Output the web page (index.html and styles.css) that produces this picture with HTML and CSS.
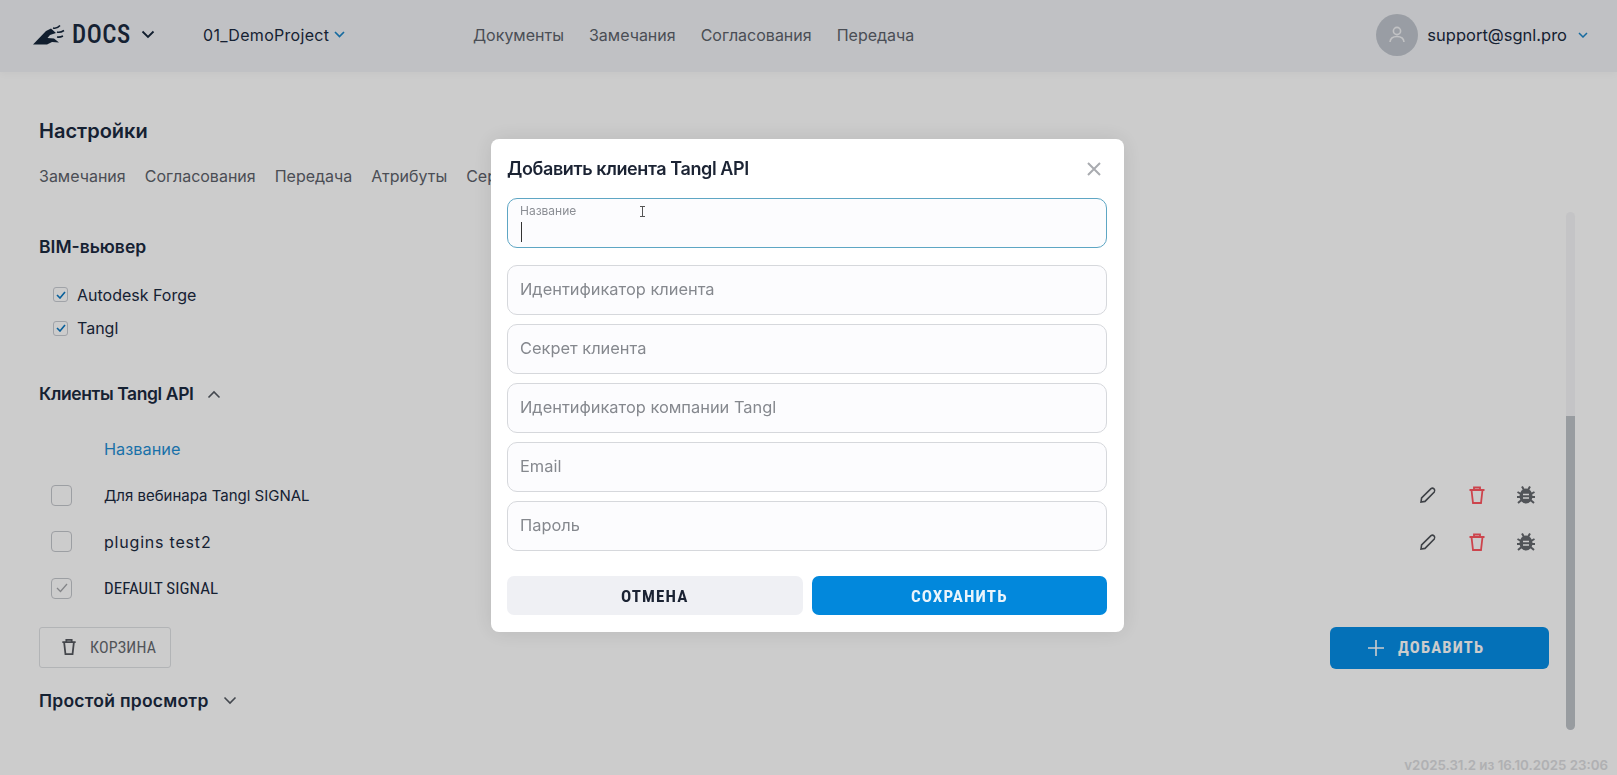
FILE: index.html
```html
<!DOCTYPE html>
<html lang="ru">
<head>
<meta charset="utf-8">
<title>Настройки</title>
<link rel="stylesheet" href="styles.css">
</head>
<body>
<div class="app">
  <header class="topbar">
    <div class="brand">
      <svg class="logo" width="32" height="20" viewBox="0 0 32 20"><path d="M0 19.500 L13 6 L18 3.500 L23 8 L17 10 L14.500 13 L21 13.500 L26 17.500 L19 17 L14 19.500 Z" fill="#16263a"/><path d="M20 3 Q24 4 27 .5 M24 7 Q27 8 31 5.500 M24 12 Q27 12.500 30 11" stroke="#16263a" stroke-width="1.500" fill="none"/></svg>
      <span class="brand-name">DOCS</span>
      <svg class="chev" width="14" height="9" viewBox="0 0 14 9"><path d="M1.500 1.500 L7 7 L12.500 1.500" stroke="#16263a" stroke-width="1.800" fill="none"/></svg>
    </div>
    <div class="project">01_DemoProject
      <svg width="11" height="7" viewBox="0 0 11 7"><path d="M1 1 L5.500 5.500 L10 1" stroke="#1c86c8" stroke-width="1.700" fill="none"/></svg>
    </div>
    <nav class="mainnav">
      <a>Документы</a><a>Замечания</a><a>Согласования</a><a>Передача</a>
    </nav>
    <div class="user">
      <span class="avatar"><svg width="20" height="20" viewBox="0 0 20 20"><circle cx="10" cy="6" r="3.600" stroke="#f2f3f6" stroke-width="1.600" fill="none"/><path d="M3 17 Q3.500 11.500 10 11.500 Q16.500 11.500 17 17" stroke="#f2f3f6" stroke-width="1.600" fill="none"/></svg></span>
      <span class="user-mail">support@sgnl.pro</span>
      <svg width="10" height="6" viewBox="0 0 10 6"><path d="M1 1 L5 5 L9 1" stroke="#1c86c8" stroke-width="1.500" fill="none"/></svg>
    </div>
  </header>

  <main class="content">
    <h1 class="page-title">Настройки</h1>
    <div class="tabs"><a>Замечания</a><a>Согласования</a><a>Передача</a><a>Атрибуты</a><a>Сер</a></div>

    <h2 class="section-title viewer-title">BIM-вьювер</h2>
    <label class="check-row"><span class="minibox"><svg width="10" height="8" viewBox="0 0 10 8"><path d="M1 4 L4 7 L9 1" stroke="#0a78c2" stroke-width="1.600" fill="none"/></svg></span>Autodesk Forge</label>
    <label class="check-row"><span class="minibox"><svg width="10" height="8" viewBox="0 0 10 8"><path d="M1 4 L4 7 L9 1" stroke="#0a78c2" stroke-width="1.600" fill="none"/></svg></span>Tangl</label>

    <div class="section-head clients-head">
      <h2 class="section-title tight">Клиенты Tangl API</h2>
      <svg width="14" height="9" viewBox="0 0 14 9"><path d="M1.500 7.500 L7 2 L12.500 7.500" stroke="#555b63" stroke-width="1.600" fill="none"/></svg>
    </div>
    <div class="col-head">Название</div>

    <div class="row">
      <span class="box"></span><span class="row-name">Для вебинара Tangl SIGNAL</span>
      <span class="row-actions">
        <svg width="20" height="20" viewBox="0 0 20 20"><path d="M3 17 L3.600 13 L13 3.600 Q14.500 2.500 16 3.800 Q17.500 5.500 16.300 7 L7 16.400 Z" stroke="#4e5258" stroke-width="1.600" fill="none"/></svg>
        <svg width="20" height="20" viewBox="0 0 20 20"><path d="M2.500 5 H17.500 M7 5 V2.500 H13 V5 M4.500 5 L6 18 H14 L15.500 5" stroke="#ff5560" stroke-width="1.800" fill="none"/></svg>
        <svg width="20" height="20" viewBox="0 0 20 20"><ellipse cx="10" cy="11" rx="6.500" ry="7.500" fill="#66696f"/><path d="M6 1.500 L8 5 M14 1.500 L12 5 M1.500 7 L5 9 M18.500 7 L15 9 M1 12 H5 M19 12 H15 M2 18 L5.500 15 M18 18 L14.500 15" stroke="#66696f" stroke-width="2"/><path d="M7 9.500 H13 M7 13 H13" stroke="#fff" stroke-width="1.500"/></svg>
      </span>
    </div>
    <div class="row">
      <span class="box"></span><span class="row-name wide">plugins test2</span>
      <span class="row-actions">
        <svg width="20" height="20" viewBox="0 0 20 20"><path d="M3 17 L3.600 13 L13 3.600 Q14.500 2.500 16 3.800 Q17.500 5.500 16.300 7 L7 16.400 Z" stroke="#4e5258" stroke-width="1.600" fill="none"/></svg>
        <svg width="20" height="20" viewBox="0 0 20 20"><path d="M2.500 5 H17.500 M7 5 V2.500 H13 V5 M4.500 5 L6 18 H14 L15.500 5" stroke="#ff5560" stroke-width="1.800" fill="none"/></svg>
        <svg width="20" height="20" viewBox="0 0 20 20"><ellipse cx="10" cy="11" rx="6.500" ry="7.500" fill="#66696f"/><path d="M6 1.500 L8 5 M14 1.500 L12 5 M1.500 7 L5 9 M18.500 7 L15 9 M1 12 H5 M19 12 H15 M2 18 L5.500 15 M18 18 L14.500 15" stroke="#66696f" stroke-width="2"/><path d="M7 9.500 H13 M7 13 H13" stroke="#fff" stroke-width="1.500"/></svg>
      </span>
    </div>
    <div class="row">
      <span class="box box-disabled"><svg width="12" height="10" viewBox="0 0 12 10"><path d="M1 5 L4.500 8.500 L11 1" stroke="#a5a7ab" stroke-width="1.300" fill="none"/></svg></span><span class="row-name narrow">DEFAULT SIGNAL</span>
    </div>

    <div class="btn-row">
      <button class="btn-trash"><svg width="16" height="18" viewBox="0 0 18 20"><path d="M1.500 4.500 H16.500 M6 4.500 V2 H12 V4.500 M3.500 4.500 L5 18 H13 L14.500 4.500" stroke="#55585e" stroke-width="2" fill="none"/></svg>КОРЗИНА</button>
      <button class="btn-add"><svg width="16" height="16" viewBox="0 0 16 16"><path d="M8 0 V16 M0 8 H16" stroke="#fff" stroke-width="1.600"/></svg>ДОБАВИТЬ</button>
    </div>

    <div class="section-head simple-head">
      <h2 class="section-title loose">Простой просмотр</h2>
      <svg width="14" height="9" viewBox="0 0 14 9"><path d="M1.500 1.500 L7 7 L12.500 1.500" stroke="#555b63" stroke-width="1.600" fill="none"/></svg>
    </div>
    <div class="version">v2025.31.2 из 16.10.2025 23:06</div>
  </main>
  <div class="scroll-track"><div class="scroll-thumb-light"></div><div class="scroll-thumb"></div></div>
</div>

<div class="overlay"></div>

<section class="modal">
  <div class="modal-head">
    <h3 class="modal-title">Добавить клиента Tangl API</h3>
    <svg width="14" height="14" viewBox="0 0 14 14"><path d="M1 1 L13 13 M13 1 L1 13" stroke="#a9abb0" stroke-width="2"/></svg>
  </div>
  <div class="field field-focus">
    <span class="field-label">Название</span>
    <span class="caret"></span>
    <svg class="ibeam" width="7" height="11" viewBox="0 0 7 11"><path d="M1 .5 H6 M3.500 .5 V10.500 M1 10.500 H6" stroke="#555" stroke-width="1" fill="none"/></svg>
  </div>
  <div class="field">Идентификатор клиента</div>
  <div class="field">Секрет клиента</div>
  <div class="field">Идентификатор компании Tangl</div>
  <div class="field">Email</div>
  <div class="field">Пароль</div>
  <div class="modal-actions">
    <button class="btn-cancel">ОТМЕНА</button>
    <button class="btn-save">СОХРАНИТЬ</button>
  </div>
</section>
</body>
</html>
```
FILE: styles.css
```css
* { box-sizing: border-box; }
html, body { margin: 0; height: 100%; overflow: hidden; }
body { font-family: "Inter", "Noto Sans", sans-serif; color: #1b2a3f; background: #fff; }
a { display: block; }
button { font: inherit; border: 0; }

.app { position: relative; height: 775px; background: #ffffff; }

.topbar { height: 72px; display: flex; align-items: center; background: #f0f2f6; padding: 0 29px 3px 33px; box-shadow: 0 2px 8px rgba(0,0,0,.03); }
.brand { display: flex; align-items: center; width: 170px; }
.logo { margin-right: 7px; }
.brand-name { font-family: "Roboto", sans-serif; font-stretch: 75%; font-weight: 500; font-size: 25px; letter-spacing: .5px; color: #1b2a3f; width: 69px; }
.project { width: 270px; font-size: 16px; letter-spacing: .3px; display: flex; align-items: center; gap: 5px; color: #1b2a3f; }
.mainnav { display: flex; gap: 25px; font-size: 16px; color: #5d626b; }
.user { margin-left: auto; display: flex; align-items: center; font-size: 16.5px; color: #1b2a3f; }
.avatar { width: 42px; height: 42px; border-radius: 50%; background: #c0c5cd; display: flex; align-items: center; justify-content: center; margin-right: 9px; }
.user-mail { margin-right: 11px; }

.content { padding: 0 68px 0 39px; }
.page-title { margin: 0; padding-top: 46px; font-size: 20px; font-weight: 600; line-height: 26px; }
.tabs { display: flex; gap: 19px; margin-top: 21px; font-size: 16px; color: #5d626b; line-height: 22px; }
.section-title { margin: 0; font-size: 17.5px; font-weight: 600; line-height: 24px; }
.tight { letter-spacing: -.4px; }
.loose { letter-spacing: .25px; }
.viewer-title { margin-top: 48px; margin-bottom: 19px; }
.check-row { display: flex; align-items: center; height: 33.500px; font-size: 16px; padding-left: 14px; gap: 9px; }
.minibox { width: 15px; height: 15px; border: 1px solid #c9ccd2; border-radius: 3px; background: #fff; display: flex; align-items: center; justify-content: center; }

.section-head { display: flex; align-items: center; gap: 14px; }
.clients-head { margin-top: 37px; }
.col-head { margin-top: 32px; padding-left: 65px; font-size: 16.3px; color: #1f8ed4; line-height: 22px; }

.row { display: flex; align-items: center; height: 46.500px; }
.col-head + .row { margin-top: 12px; }
.box { width: 21px; height: 21px; margin-left: 12px; border: 1px solid #c4c7cc; border-radius: 4px; display: flex; align-items: center; justify-content: center; flex: none; }
.row-name { margin-left: 32px; font-size: 15px; color: #1b2a3f; }
.wide { font-size: 16px; letter-spacing: .8px; }
.narrow { font-family: "Roboto", sans-serif; font-stretch: 75%; font-weight: 400; font-size: 17px; }
.row-actions { margin-left: auto; margin-right: 13px; display: flex; gap: 29px; }

.btn-row { display: flex; justify-content: space-between; margin-top: 15px; }
.btn-trash { width: 132px; height: 41px; display: flex; align-items: center; gap: 13px; padding-left: 21px; background: transparent; border: 1px solid #dfe1e4; border-radius: 3px; font-family: "Roboto", sans-serif; font-stretch: 75%; font-weight: 400; font-size: 16px; letter-spacing: .2px; color: #66696f; }
.btn-add { width: 219px; height: 42px; display: flex; align-items: center; gap: 14px; padding-left: 38px; background: #068ee6; border-radius: 6px; font-family: "Roboto", sans-serif; font-stretch: 75%; font-weight: 700; font-size: 16.500px; letter-spacing: 1.200px; color: #fff; }

.simple-head { margin-top: 20px; }
.version { position: absolute; right: 9px; bottom: 2px; font-size: 13.300px; font-weight: 600; color: #dcdde0; }

.scroll-track { position: absolute; left: 1566px; top: 212px; width: 9px; }
.scroll-thumb-light { height: 204px; background: #f6f6f8; border-radius: 5px 5px 0 0; }
.scroll-thumb { height: 314px; background: #bfc3c9; border-radius: 0 0 5px 5px; }

.overlay { position: fixed; inset: 0; background: rgba(0,0,0,.2); }

.modal { position: fixed; left: 491px; top: 139px; width: 633px; height: 493px; background: #fff; border-radius: 8px; padding: 0 16px; display: flex; flex-direction: column; box-shadow: 0 0 22px rgba(0,0,0,.1); }
.modal-head { height: 59px; display: flex; align-items: center; justify-content: space-between; padding-right: 7px; }
.modal-title { margin: 0; font-size: 18px; font-weight: 600; letter-spacing: -.4px; color: #1b2333; }
.field { height: 50px; margin-bottom: 9px; margin-right: 1px; border: 1px solid #d6d8dc; border-radius: 10px; background: #fcfcfe; padding: 0 12px 3px; display: flex; align-items: center; font-size: 16.400px; color: #85888e; flex: none; }
.field-focus { position: relative; margin-bottom: 17px; border-color: #5ea6c4; }
.field-label { position: absolute; left: 12px; top: 4px; font-size: 12px; color: #8b8e94; }
.caret { position: absolute; left: 13px; top: 23px; width: 1px; height: 20px; background: #333; }
.ibeam { position: absolute; left: 131px; top: 7px; }
.modal-actions { display: flex; gap: 9px; margin-top: 16px; margin-right: 1px; }
.btn-cancel, .btn-save { flex: 1; height: 39px; border-radius: 7px; font-family: "Roboto", sans-serif; font-stretch: 75%; font-weight: 700; font-size: 17px; letter-spacing: 1.100px; }
.btn-cancel { background: #eff0f4; color: #1b2333; }
.btn-save { background: #0288dc; color: #eaf4fb; }
```
